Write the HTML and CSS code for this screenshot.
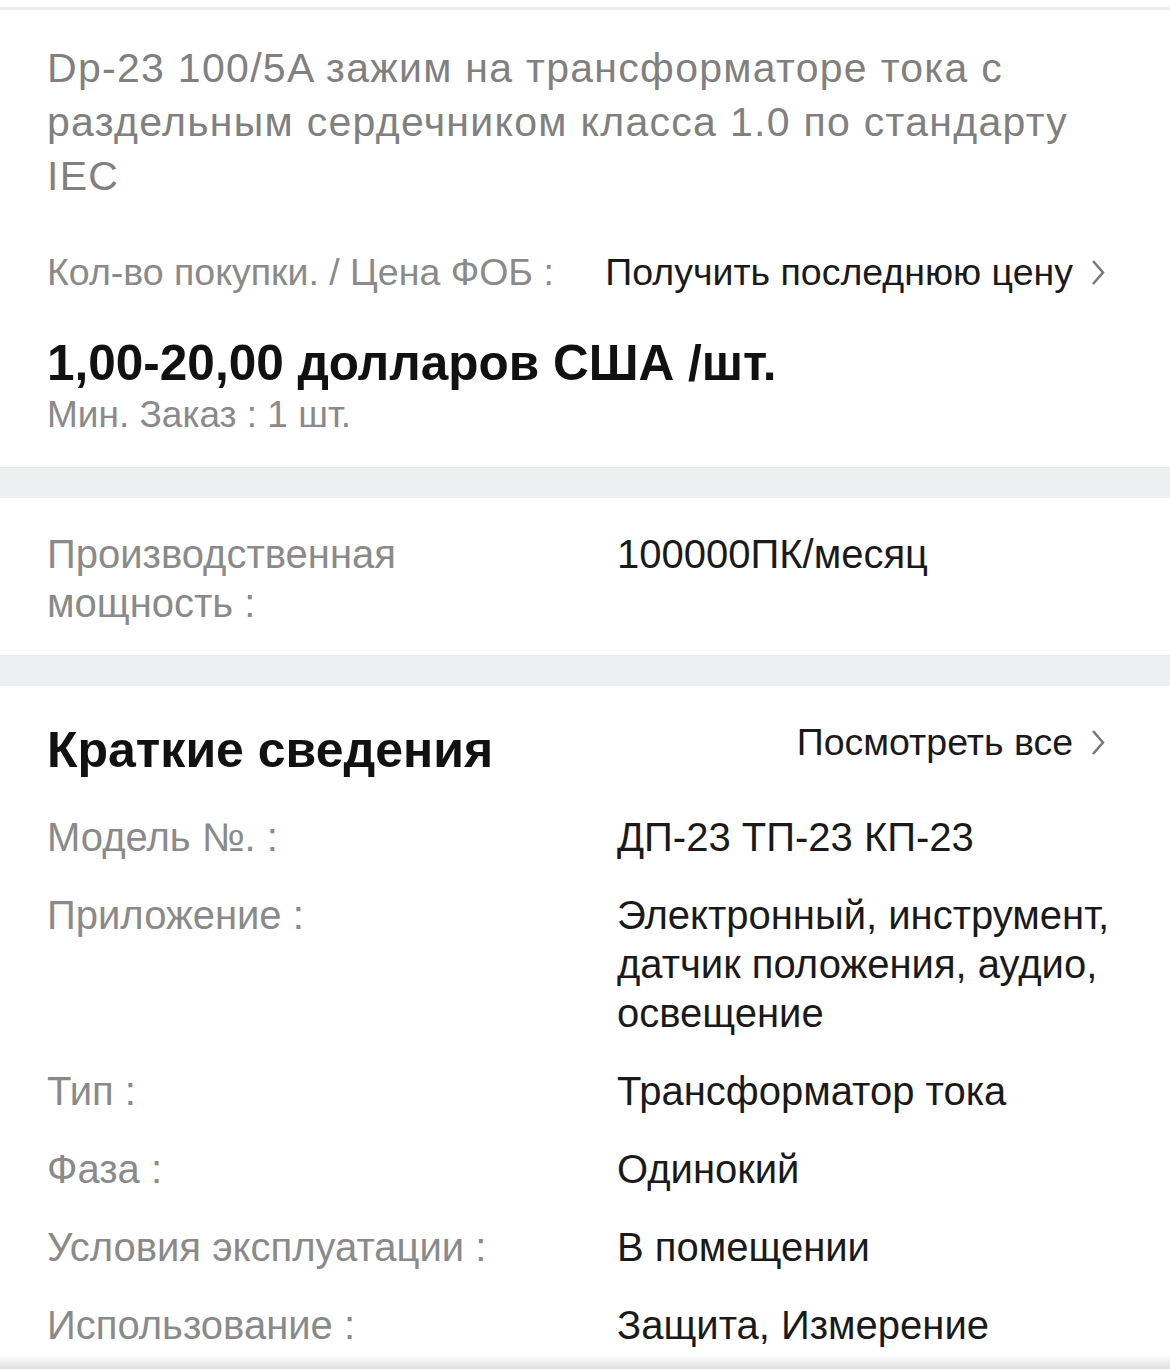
FILE: index.html
```html
<!DOCTYPE html>
<html lang="ru">
  <head>
    <meta charset="UTF-8" />
    <meta name="viewport" content="width=device-width, initial-scale=1.0" />
    <title>Dp-23 100/5A</title>
    <link rel="stylesheet" href="styles.css">
  </head>
  <body>
    <div class="topline"></div>

    <div class="section intro">
      <h1 class="title">Dp-23 100/5A зажим на трансформаторе тока с раздельным сердечником класса 1.0 по стандарту IEC</h1>
      <div class="price-row">
        <span class="label">Кол-во покупки. / Цена ФОБ :</span>
        <a class="link" href="#">Получить последнюю цену
          <svg class="chevron" viewBox="0 0 14 27" width="14" height="27"><polyline points="2,2 12,13.5 2,25" /></svg>
        </a>
      </div>
      <div class="price">1,00-20,00 долларов США /шт.</div>
      <div class="min-order">Мин. Заказ : 1 шт.</div>
    </div>

    <div class="band"></div>

    <div class="section capacity">
      <div class="props">
        <div class="label">Производственная мощность :</div>
        <div class="value">100000ПК/месяц</div>
      </div>
    </div>

    <div class="band"></div>

    <div class="section summary">
      <div class="summary-head">
        <h2>Краткие сведения</h2>
        <a class="link" href="#">Посмотреть все
          <svg class="chevron" viewBox="0 0 14 27" width="14" height="27"><polyline points="2,2 12,13.5 2,25" /></svg>
        </a>
      </div>
      <div class="props">
        <div class="label">Модель №. :</div>
        <div class="value">ДП-23 ТП-23 КП-23</div>
        <div class="label">Приложение :</div>
        <div class="value">Электронный, инструмент, датчик положения, аудио, освещение</div>
        <div class="label">Тип :</div>
        <div class="value">Трансформатор тока</div>
        <div class="label">Фаза :</div>
        <div class="value">Одинокий</div>
        <div class="label">Условия эксплуатации :</div>
        <div class="value">В помещении</div>
        <div class="label">Использование :</div>
        <div class="value">Защита, Измерение</div>
      </div>
    </div>

    <div class="bottom-shade"></div>
  </body>
</html>
```

FILE: styles.css
```css
body {
  font-family: "Liberation Sans", Arial, sans-serif;
  background-color: #fff;
  color: #1a1a1a;
  margin: 0;
  padding: 0;
}
.topline {
  height: 7px;
  border-bottom: 3px solid #ebebf0;
}
.section {
  padding: 0 47px;
}
.band {
  height: 30px;
  background-color: #eeeff1;
  border-top: 1px solid #e9e9ec;
}
.label {
  color: #8a8a8a;
}
.link {
  color: #1a1a1a;
  text-decoration: none;
  display: inline-flex;
  align-items: center;
  gap: 18px;
}
.chevron {
  fill: none;
  stroke: #777;
  stroke-width: 2.5;
}

/* intro */
.intro {
  padding-top: 31px;
  padding-bottom: 32px;
}
.title {
  margin: 0;
  font-size: 41px;
  font-weight: normal;
  letter-spacing: 1.3px;
  line-height: 54px;
  color: #808080;
}
.price-row {
  display: flex;
  justify-content: space-between;
  align-items: center;
  margin-top: 45px;
  font-size: 37.5px;
  line-height: 48px;
  padding-right: 18px;
}
.price {
  margin-top: 41px;
  font-size: 49.5px;
  font-weight: bold;
  line-height: 52px;
  color: #111;
}
.min-order {
  margin-top: 6px;
  font-size: 37px;
  line-height: 40px;
  color: #8a8a8a;
}

/* properties */
.props {
  display: grid;
  grid-template-columns: 540px 1fr;
  column-gap: 30px;
  row-gap: 29px;
  font-size: 40px;
  line-height: 49px;
}
.capacity {
  padding-top: 32px;
  padding-bottom: 27px;
}

/* summary */
.summary {
  padding-top: 36px;
  padding-bottom: 40px;
}
.summary-head {
  display: flex;
  justify-content: space-between;
  align-items: flex-start;
  margin-bottom: 35px;
  padding-right: 18px;
}
.summary-head h2 {
  margin: 0;
  font-size: 50px;
  line-height: 56px;
  color: #111;
}
.summary-head .link {
  font-size: 37.5px;
  line-height: 40px;
}
.bottom-shade {
  position: fixed;
  left: 0;
  right: 0;
  bottom: 0;
  height: 14px;
  background: linear-gradient(to bottom, rgba(0, 0, 0, 0), rgba(0, 0, 0, 0.12));
}
```
